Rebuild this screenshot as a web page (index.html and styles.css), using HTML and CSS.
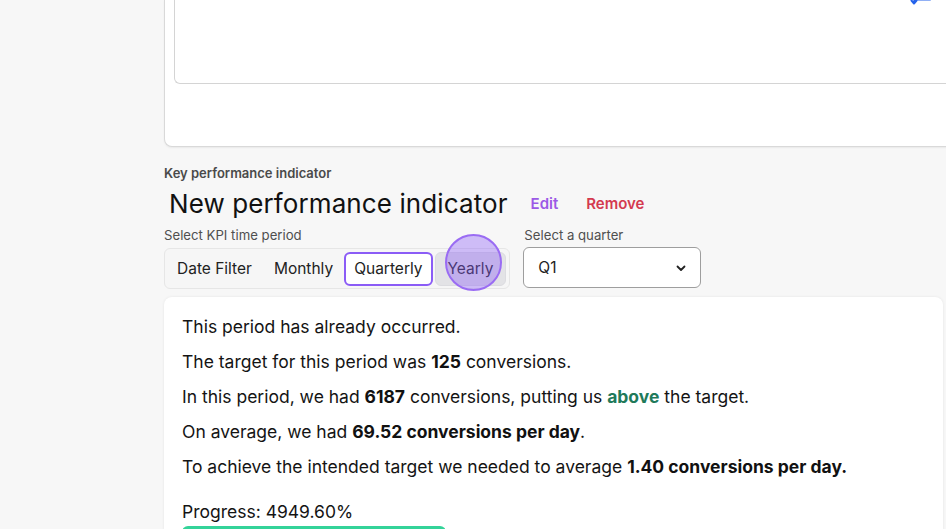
FILE: index.html
```html
<!DOCTYPE html>
<html>
<head>
<meta charset="utf-8">
<link rel="stylesheet" href="styles.css">
</head>
<body>
<div class="page">
  <div class="top-card">
    <div class="inner-box">
      <svg class="corner-icon" width="24" height="10" viewBox="0 0 24 10"><path d="M20 1.5 H7 Q4 1.5 4 4.5 M1.5 2.5 L4 5.5 L6.5 2.5" fill="none" stroke="#2563eb" stroke-width="2" stroke-linecap="round" stroke-linejoin="round"/></svg>
    </div>
  </div>

  <div class="kpi">
    <div class="kpi-label">Key performance indicator</div>
    <div class="kpi-head">
      <h1 class="kpi-title">New performance indicator</h1>
      <a class="act edit">Edit</a>
      <a class="act remove">Remove</a>
    </div>
    <div class="controls">
      <div class="field">
        <div class="field-label">Select KPI time period</div>
        <div class="segmented">
          <button class="seg">Date Filter</button>
          <button class="seg">Monthly</button>
          <button class="seg active">Quarterly</button>
          <button class="seg hover">Yearly<span class="cursor-ring"></span></button>
        </div>
      </div>
      <div class="field">
        <div class="field-label">Select a quarter</div>
        <div class="select">
          <span>Q1</span>
          <svg width="14" height="14" viewBox="0 0 14 14"><path d="M3.5 5.5 L7 9 L10.5 5.5" fill="none" stroke="#222" stroke-width="1.8" stroke-linecap="round" stroke-linejoin="round"/></svg>
        </div>
      </div>
    </div>
  </div>

  <div class="result-card">
    <p>This period has already occurred.</p>
    <p>The target for this period was <b>125</b> conversions.</p>
    <p>In this period, we had <b>6187</b> conversions, putting us <b class="above">above</b> the target.</p>
    <p>On average, we had <b>69.52 conversions per day</b>.</p>
    <p>To achieve the intended target we needed to average <b>1.40 conversions per day.</b></p>
    <div class="progress-label">Progress: 4949.60%</div>
    <div class="progress"><div class="progress-fill"></div></div>
  </div>
</div>
</body>
</html>
```
FILE: styles.css
```css
html, body {
  margin: 0;
  padding: 0;
  background: #f7f7f7;
  font-family: Inter, "Noto Sans", sans-serif;
  color: #1a1a1a;
  overflow: hidden;
  height: 529px;
}
.page {
  padding-left: 164px;
  width: 800px;
}
.top-card {
  background: #fff;
  border: 1px solid #d9d9d9;
  border-top: none;
  border-right: none;
  border-radius: 0 0 0 8px;
  height: 147px;
  padding: 0 0 0 9px;
  box-sizing: border-box;
  box-shadow: 0 1px 2px rgba(0,0,0,0.06);
}
.inner-box {
  position: relative;
  height: 84px;
  border: 1px solid #d4d4d4;
  border-top: none;
  border-right: none;
  border-radius: 0 0 0 6px;
  box-sizing: border-box;
}
.corner-icon {
  position: absolute;
  left: 735px;
  top: -2px;
}
.kpi {
  padding-top: 18px;
}
.kpi-label {
  font-size: 13px;
  font-weight: 600;
  color: #4a4a4a;
  line-height: 16px;
}
.kpi-head {
  display: flex;
  align-items: center;
  margin-top: 4px;
  height: 36px;
}
.kpi-title {
  margin: 0 0 0 5px;
  font-size: 26px;
  font-weight: 400;
  color: #111;
  letter-spacing: 0.1px;
}
.act {
  font-size: 15px;
  font-weight: 600;
  margin-left: 23px;
}
.edit { color: #9b59e6; }
.remove { color: #d43a4f; margin-left: 28px; }
.controls {
  display: flex;
  gap: 13px;
  margin-top: 6px;
}
.field-label {
  font-size: 13.2px;
  color: #4f4f4f;
  line-height: 16px;
  margin-bottom: 5px;
}
.field + .field .field-label { margin-bottom: 4px; margin-left: 1px; }
.segmented {
  display: flex;
  align-items: center;
  height: 41px;
  box-sizing: border-box;
  border: 1px solid #e6e6e6;
  border-radius: 6px;
  background: #f6f6f6;
  padding: 2px 3px 2px 2px;
  gap: 2px;
}
.seg {
  font-family: inherit;
  font-size: 15.5px;
  color: #222;
  background: transparent;
  border: 2px solid transparent;
  border-radius: 6px;
  height: 34px;
  padding: 0 8px;
  cursor: pointer;
  position: relative;
  white-space: nowrap;
  flex-shrink: 0;
}
.seg.active {
  border-color: #8b5cf6;
  background: #fff;
  margin-left: -1px;
}
.seg.hover {
  background: #e3e3e6;
  border-color: #dcdce0;
  border-width: 1px;
  padding: 0 12px;
  margin-left: 0;
}
.cursor-ring {
  position: absolute;
  width: 57px;
  height: 57px;
  border-radius: 50%;
  background: rgba(139, 92, 246, 0.38);
  border: 2px solid #9a6cf3;
  box-sizing: border-box;
  left: 9px;
  top: -19px;
}
.select {
  width: 178px;
  height: 41px;
  box-sizing: border-box;
  border: 1px solid #9e9e9e;
  border-radius: 6px;
  background: #fff;
  display: flex;
  align-items: center;
  justify-content: space-between;
  padding: 0 12px 0 14px;
  font-size: 15.5px;
  color: #222;
}
.result-card {
  margin-top: 8px;
  width: 779px;
  background: #fff;
  border-radius: 8px;
  box-shadow: 0 0 3px rgba(0,0,0,0.08);
  padding: 19px 18px 0 18px;
  box-sizing: border-box;
  height: 240px;
}
.result-card p {
  margin: 0 0 13px 0;
  font-size: 17.5px;
  line-height: 22px;
  color: #141414;
}
.result-card b { font-weight: 700; color: #111; }
.result-card b.above { color: #1f7a5a; }
.progress-label {
  margin-top: 23px;
  font-size: 17.5px;
  line-height: 22px;
  color: #141414;
}
.progress {
  margin-top: 3px;
  height: 12px;
  width: 264px;
}
.progress-fill {
  height: 100%;
  width: 100%;
  background: #34d399;
  border-radius: 6px;
}
```
